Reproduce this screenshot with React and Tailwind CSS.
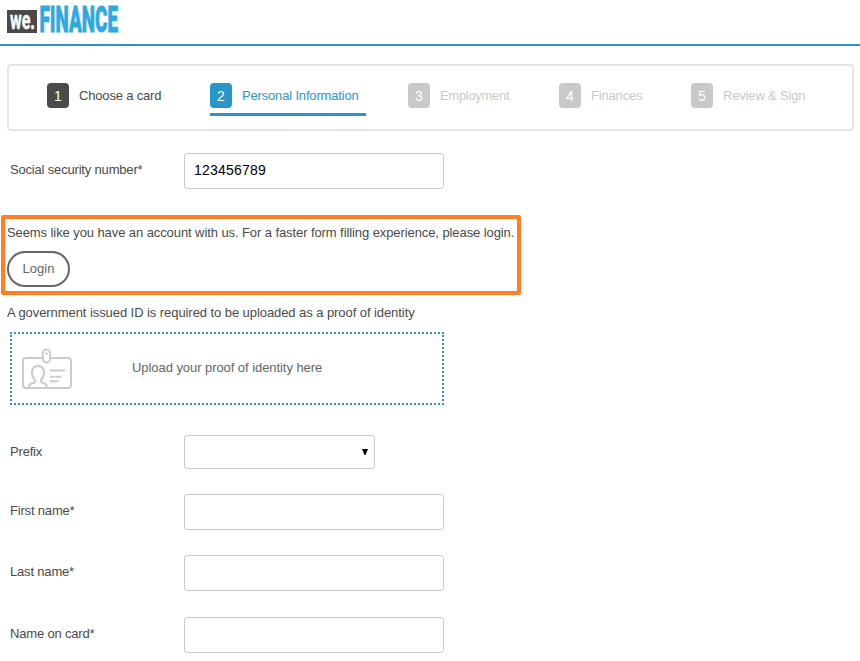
const STEPS = [
  { n: 1, label: 'Choose a card', width: 'w-[163px]', badge: 'bg-[#4a4a4a]', text: 'text-[#4a4a4a]' },
  { n: 2, label: 'Personal Information', width: 'w-[198px]', badge: 'bg-[#2896cb]', text: 'text-[#2896cb]', active: true },
  { n: 3, label: 'Employment', width: 'w-[151px]', badge: 'bg-[#c9c9c9]', text: 'text-[#c9c9c9] tracking-[-0.3px]' },
  { n: 4, label: 'Finances', width: 'w-[132px]', badge: 'bg-[#c9c9c9]', text: 'text-[#c9c9c9]' },
  { n: 5, label: 'Review & Sign', width: 'w-[130px]', badge: 'bg-[#c9c9c9]', text: 'text-[#c9c9c9]' },
];

function Logo() {
  return (
    <svg className="ml-[7px] mt-[5px] block" width="116" height="36" viewBox="0 0 116 36">
      <rect x="0" y="5" width="30" height="23" fill="#4a4a4a" />
      <text x="3" y="23.500" textLength="25" lengthAdjust="spacingAndGlyphs" fontFamily="Roboto, 'Liberation Sans', sans-serif" fontWeight="700" fontSize="25" fill="#fff" stroke="#fff" strokeWidth="0.5">we.</text>
      <text x="32.500" y="27.300" textLength="78.500" lengthAdjust="spacingAndGlyphs" fontFamily="Roboto, 'Liberation Sans', sans-serif" fontWeight="900" fontSize="37.500" fill="#2fa9e0" stroke="#2fa9e0" strokeWidth="0.8">FINANCE</text>
    </svg>
  );
}

function IdCardIcon() {
  return (
    <svg className="block shrink-0" width="50" height="42" viewBox="0.500 0 50 42" fill="none" stroke="#cbcbcb" strokeWidth="2">
      <path d="M20.500 10H4.500a3 3 0 0 0-3 3v24a3 3 0 0 0 3 3h42a3 3 0 0 0 3-3V13a3 3 0 0 0-3-3H29" />
      <rect x="21.300" y="1.500" width="7.400" height="13" rx="3.700" />
      <circle cx="25" cy="5.500" r="0.600" strokeWidth="1.200" />
      <path d="M7.500 39.500c0-3 1.500-4 4-4.500 2.500-.600 2.800-2 1.800-3.200-1.800-1.800-2.800-4-2.800-6.800 0-4.300 2.300-7 6-7s6 2.700 6 7c0 2.800-1 5-2.800 6.800-1 1.200-.700 2.600 1.800 3.200 2.500.500 4 1.500 4 4.500" />
      <path d="M28.500 22.500h15M28.500 28.700h4M33.500 28.700h6.500M28.500 33.200h8.500" />
    </svg>
  );
}

function Field({ label, className, children }) {
  return (
    <div className={'flex pl-[10px] ' + className}>
      <label className="w-[174px] pt-[9px] leading-[15px] tracking-[-0.18px]">{label}</label>
      {children}
    </div>
  );
}

const inputClass = 'block h-[36px] w-[260px] rounded-[3px] border border-[#c9c9c9] bg-white pb-[3px] pl-[9px] pr-[10px] font-[Arial,"Liberation_Sans",sans-serif] text-[14px] tracking-[0.2px] text-black outline-none';

export default function App() {
  return (
    <div className="h-[661px] w-[860px] overflow-hidden bg-white font-['Liberation_Sans',Arial,sans-serif] text-[13px] leading-[15px] text-[#4a4a4a]">
      <header className="h-[46px] border-b-2 border-[#2896cb] pt-[0.1px]">
        <Logo />
      </header>

      <nav className="ml-[7px] mt-[18px] flex h-[67px] w-[847px] rounded-[4px] border-2 border-[#e5e5e5] pl-[38px] pt-[17px]">
        {STEPS.map((s) => (
          <div key={s.n} className={'shrink-0 ' + s.width}>
            <div className={'inline-flex h-[33px] whitespace-nowrap tracking-[-0.17px] ' + (s.active ? 'w-[156px] border-b-3 border-[#2896cb]' : '')}>
              <span className={'flex h-[25px] w-[22px] shrink-0 items-center justify-center rounded-[4px] pt-px text-[14px] tracking-normal text-white ' + s.badge}>{s.n}</span>
              <span className={'pl-[10px] pt-[5px] ' + s.text}>{s.label}</span>
            </div>
          </div>
        ))}
      </nav>

      <Field label="Social security number*" className="mt-[22px] h-[36px]">
        <input className={inputClass} defaultValue="123456789" />
      </Field>

      <section className="ml-px mt-[26px] h-[80px] w-[520px] rounded-[2px] border-4 border-[#ff7f27] pl-[2px] pt-[6px]">
        <p className="whitespace-nowrap tracking-[-0.087px]">Seems like you have an account with us. For a faster form filling experience, please login.</p>
        <button className="mt-[11px] block h-[36px] w-[63px] rounded-full border-2 border-[#666] pb-[2px] text-[#666]">Login</button>
      </section>

      <p className="ml-[7px] mt-[10px] tracking-[-0.07px]">A government issued ID is required to be uploaded as a proof of identity</p>

      <div className="ml-[10px] mt-[12px] flex h-[73px] w-[434px] border-2 border-dotted border-[#2896cb] pl-[10px] pt-[14px]">
        <IdCardIcon />
        <span className="ml-[60px] mt-[12px] tracking-[-0.06px] text-[#666]">Upload your proof of identity here</span>
      </div>

      <Field label="Prefix" className="mt-[30px] h-[34px]">
        <div className="flex h-[34px] w-[191px] items-center justify-end rounded-[3px] border border-[#c9c9c9] pr-[6px]">
          <svg width="6" height="6" viewBox="0 0 6 6"><path d="M0 0h6L3.500 6h-1z" fill="#000" /></svg>
        </div>
      </Field>
      <Field label="First name*" className="mt-[25px] h-[36px]"><input className={inputClass} /></Field>
      <Field label="Last name*" className="mt-[25px] h-[36px]"><input className={inputClass} /></Field>
      <Field label="Name on card*" className="mt-[26px] h-[36px]"><input className={inputClass} /></Field>
    </div>
  );
}
